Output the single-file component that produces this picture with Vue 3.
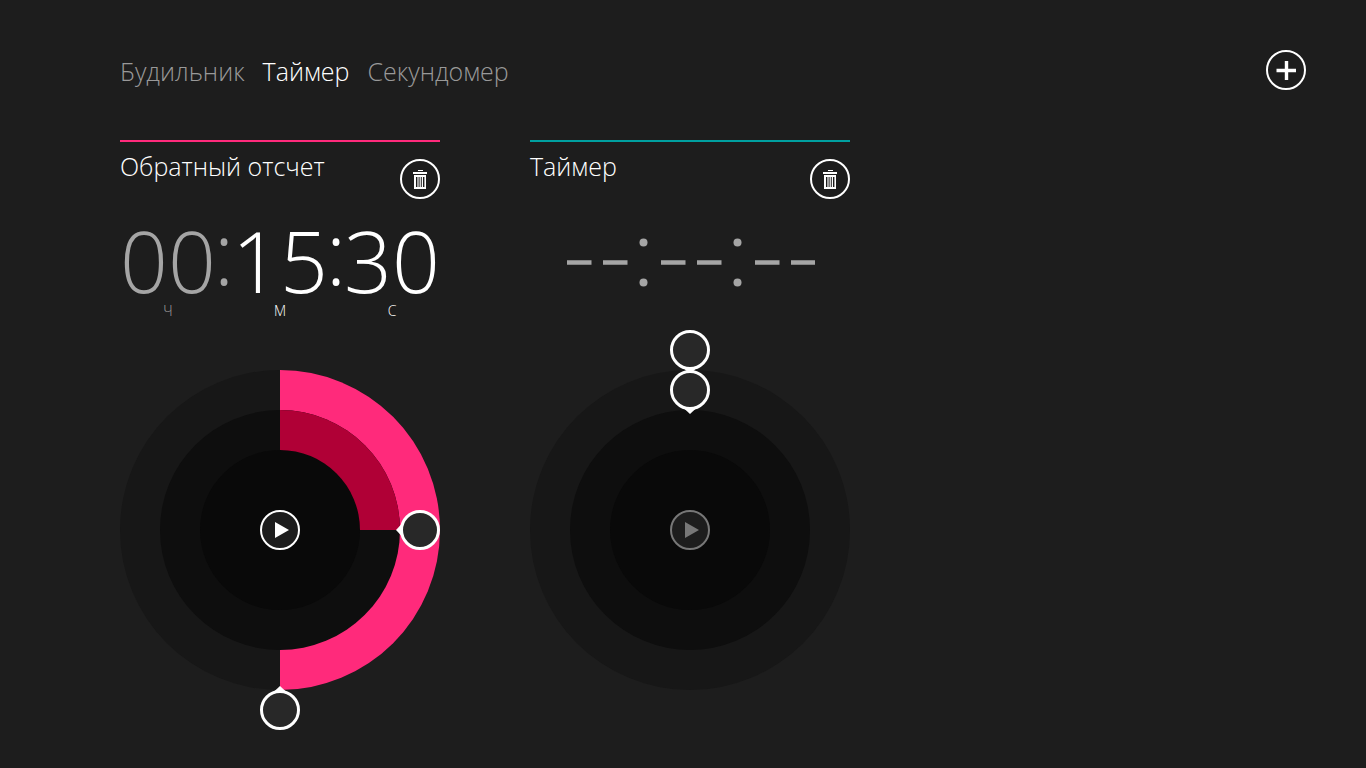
<script setup>
const tabs = [
  { name: 'Будильник', active: false },
  { name: 'Таймер', active: true },
  { name: 'Секундомер', active: false },
]

const timers = [
  {
    id: 'countdown',
    title: 'Обратный отсчет',
    accent: 'pink',
    set: true,
    units: [
      { value: '00', label: 'Ч', dim: true },
      { value: '15', label: 'М', dim: false },
      { value: '30', label: 'С', dim: false },
    ],
    handles: [
      { label: 'Минуты', now: 15, radius: 140, angle: 90 },
      { label: 'Секунды', now: 30, radius: 180, angle: 180 },
    ],
  },
  {
    id: 'timer',
    title: 'Таймер',
    accent: 'teal',
    set: false,
    units: [],
    handles: [
      { label: 'Секунды', now: 0, radius: 180, angle: 0 },
      { label: 'Минуты', now: 0, radius: 140, angle: 0 },
    ],
  },
]

const place = (h) => `rotate(${h.angle} 160 200) translate(160 ${200 - h.radius})`
</script>

<template>
  <div class="app">
    <header class="top">
      <nav class="tabs">
        <a v-for="t in tabs" :key="t.name" href="#" class="tab" :class="{ active: t.active }">{{ t.name }}</a>
      </nav>
      <button class="round" type="button" aria-label="Добавить">
        <svg width="40" height="40" viewBox="0 0 40 40">
          <circle cx="20" cy="20" r="19" fill="none" stroke="#fff" stroke-width="2" />
          <path d="M10.5 20.5H30M20.5 11V30" stroke="#fff" stroke-width="3.4" fill="none" />
        </svg>
      </button>
    </header>

    <main class="cards">
      <section v-for="t in timers" :key="t.id" class="card" :class="t.accent">
        <div class="head">
          <h2>{{ t.title }}</h2>
          <button class="round" type="button" aria-label="Удалить">
            <svg width="40" height="40" viewBox="0 0 40 40">
              <circle cx="20" cy="20" r="19" fill="none" stroke="#fff" stroke-width="2" />
              <path d="M18 11h5v1h-5zM13 13h14v2H13z" fill="#fff" />
              <path fill-rule="evenodd" fill="#fff" d="M14 16h12v14H14zM16 18v10h1.4V18zM18.6 18v10h1V18zM20.8 18v10h1V18zM23 18v10h1.4V18z" />
            </svg>
          </button>
        </div>

        <div class="clock">
          <template v-if="t.set">
            <template v-for="(u, i) in t.units" :key="u.label">
              <span v-if="i" class="colon" :class="{ dim: t.units[i - 1].dim }">:</span>
              <div class="unit" :class="{ dim: u.dim }">
                <span class="digits">{{ u.value }}</span>
                <span class="label">{{ u.label }}</span>
              </div>
            </template>
          </template>
          <svg v-else class="empty" width="250" height="100" viewBox="0 0 250 100" role="img" aria-label="Не задано">
            <path d="M2 62.5h24.5M38 62.5h24.5M96 62.5h24.5M132 62.5h24.5M190 62.5h24.5M226 62.5h24" stroke="#a5a5a5" stroke-width="4.5" />
            <g fill="#a5a5a5">
              <circle cx="78.5" cy="42.5" r="4" /><circle cx="78.5" cy="82.5" r="4" />
              <circle cx="172.5" cy="42.5" r="4" /><circle cx="172.5" cy="82.5" r="4" />
            </g>
          </svg>
        </div>

        <div class="dial">
          <svg width="320" height="400" viewBox="0 0 320 400">
            <circle cx="160" cy="200" r="160" fill="#171717" />
            <path v-if="t.set" d="M160 40A160 160 0 0 1 160 360Z" fill="#ff2a7b" />
            <circle cx="160" cy="200" r="120" fill="#0e0e0e" />
            <path v-if="t.set" d="M160 200V80A120 120 0 0 1 280 200Z" fill="#b00036" />
            <circle cx="160" cy="200" r="80" fill="#090909" />
            <g
              v-for="h in t.handles"
              :key="h.label"
              :transform="place(h)"
              role="slider"
              tabindex="0"
              :aria-label="h.label"
              aria-valuemin="0"
              aria-valuemax="60"
              :aria-valuenow="h.now"
            >
              <path d="M-7 17.5L0 24L7 17.5Z" fill="#fff" />
              <circle r="18.5" fill="#282828" stroke="#fff" stroke-width="3" />
            </g>
          </svg>
          <button class="round play" type="button" aria-label="Пуск" :disabled="!t.set">
            <svg width="40" height="40" viewBox="0 0 40 40">
              <circle cx="20" cy="20" r="19" fill="#1d1d1d" stroke="currentColor" stroke-width="2" />
              <path d="M15 12L29 20L15 28Z" fill="currentColor" />
            </svg>
          </button>
        </div>
      </section>
    </main>
  </div>
</template>

<style>
body {
  background: #1d1d1d;
}
</style>

<style scoped>
.app {
  min-height: 100vh;
  box-sizing: border-box;
  padding: 50px 60px 38px 120px;
  background: #1d1d1d;
  color: #fff;
  font-family: "Open Sans", "Noto Sans", sans-serif;
  font-weight: 300;
}
.top {
  display: flex;
  justify-content: space-between;
  margin-bottom: 48px;
}
.tabs {
  display: flex;
  gap: 18px;
}
.tab {
  font-size: 25px;
  line-height: 42px;
  color: #999;
  text-decoration: none;
}
.tab.active {
  color: #fff;
}
.round {
  display: block;
  flex: none;
  width: 40px;
  height: 40px;
  padding: 0;
  border: 0;
  border-radius: 50%;
  background: none;
  color: #fff;
}
.round svg {
  display: block;
}
.cards {
  display: flex;
  gap: 90px;
}
.card {
  width: 320px;
  border-top: 2px solid;
}
.pink {
  border-color: #ff2a7b;
}
.teal {
  border-color: #00a0a0;
}
.head {
  display: flex;
  justify-content: space-between;
  height: 58px;
}
.head .round {
  margin-top: 17px;
}
h2 {
  margin: 0;
  font-size: 25px;
  font-weight: 300;
  line-height: 48px;
}
.clock {
  display: flex;
  justify-content: space-between;
  height: 130px;
}
.unit {
  display: flex;
  flex-direction: column;
  align-items: center;
}
.digits,
.colon {
  font-size: 84px;
  line-height: 72px;
  margin-top: 25px;
}
.colon {
  display: flex;
  justify-content: center;
  width: 14px;
  margin-top: 16px;
  font-size: 86px;
}
.label {
  font-size: 14px;
  line-height: 20px;
  margin-top: 4px;
}
.dim {
  color: #a5a5a5;
}
.empty {
  margin: 0 auto;
}
.dial {
  position: relative;
}
.dial > svg {
  display: block;
  width: 100%;
  height: auto;
}
.play {
  position: absolute;
  top: 50%;
  left: 50%;
  transform: translate(-50%, -50%);
}
.play:disabled {
  color: #777;
}
</style>
